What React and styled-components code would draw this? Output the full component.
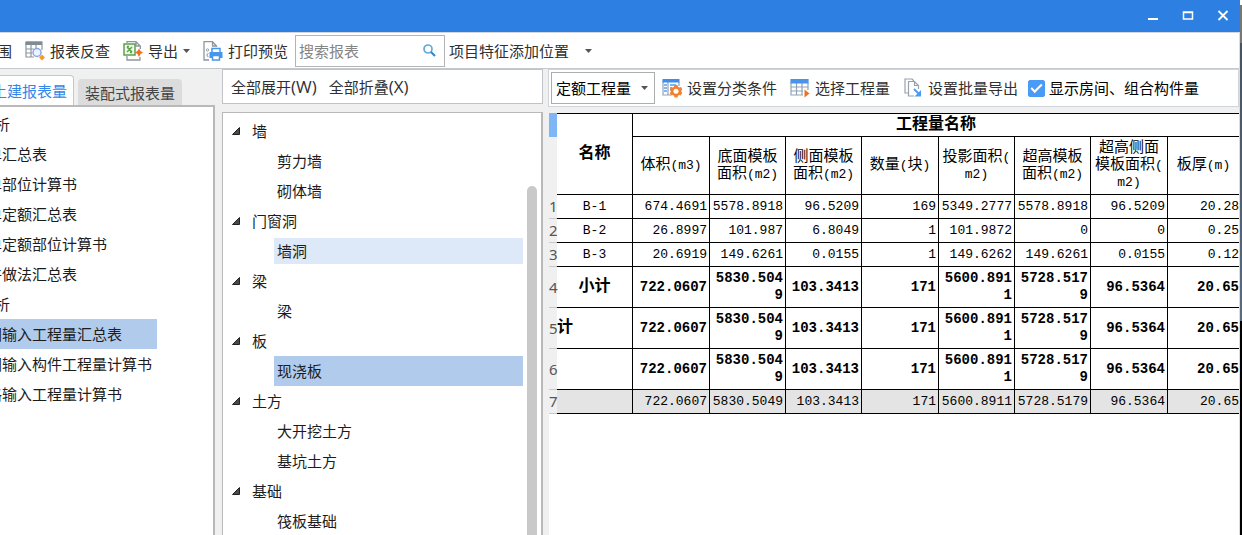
import React, { useState } from "react";
import styled, { createGlobalStyle } from "styled-components";

const GlobalStyle = createGlobalStyle`
  * {
    box-sizing: border-box;
  }

  body {
    margin: 0;
    overflow: hidden;
    background: #f0f0f0;
    color: #1c1c1c;
    font-family: "Open Sans", "Noto Sans CJK SC", sans-serif;
    font-size: 15px;
    line-height: 20px;
  }

  button, input, select {
    font: inherit;
    color: inherit;
  }
`;

const Screen = styled.div`
  display: flex;
  height: 100vh;
`;
const Window = styled.div`
  flex: 1;
  min-width: 0;
  display: flex;
  flex-direction: column;
  border-right: 1px solid #d5dce6;
`;
const DesktopEdge = styled.div`
  width: 2px;
  background: linear-gradient(#fff 1%, #777 1%, #777 8%, #46525f 8%, #5a6b80 60%, #000 60%);
`;
const TitleBar = styled.header`
  display: flex;
  justify-content: flex-end;
  align-items: center;
  gap: 13px;
  height: 32px;
  padding-right: 6px;
  margin-right: -1px;
  background: #2d80e2;
`;
const WindowButton = styled.button`
  display: flex;
  padding: 5px;
  border: none;
  background: none;

  svg {
    width: 12px;
    height: 12px;
  }
`;
const Toolbar = styled.div`
  display: flex;
  align-items: center;
  gap: 1px;
  height: 37px;
  background: #fff;
  border-top: 1px solid #d3d7dc;
  border-bottom: 1px solid #c3c9cf;
`;
const ToolButton = styled.button`
  display: flex;
  align-items: center;
  gap: 5px;
  height: 28px;
  padding: 0 6px;
  margin-left: ${(props) => (props.$cut ? "-9px" : "0")};
  border: none;
  background: none;
  color: #303030;
  white-space: nowrap;

  svg {
    flex: none;
  }
`;
const SearchBox = styled.label`
  display: flex;
  align-items: center;
  width: 150px;
  height: 32px;
  padding: 0 8px 0 3px;
  border: 1px solid #b4b4b4;

  input {
    flex: 1;
    min-width: 0;
    padding: 0;
    border: none;
    outline: none;
  }

  input::placeholder {
    color: #858585;
  }
`;
const PlaceButton = styled(ToolButton)`
  gap: 16px;
  padding: 0 3px;
`;
const Body = styled.div`
  flex: 1;
  min-height: 0;
  display: flex;
`;
const ReportPane = styled.section`
  display: flex;
  flex-direction: column;
  width: 215px;
  margin-right: 7px;
`;
const Tabs = styled.div`
  display: flex;
  align-items: flex-end;
  gap: 4px;
  height: 36px;
  overflow: hidden;
`;
const Tab = styled.button`
  height: ${(props) => (props.$active ? "30px" : "26px")};
  padding: 0 6px;
  margin-left: ${(props) => (props.$active ? "-15px" : "0")};
  border: 1px solid ${(props) => (props.$active ? "#c4c8cc" : "#dcdcdc")};
  border-bottom: none;
  border-radius: 4px 4px 0 0;
  background: ${(props) => (props.$active ? "#fff" : "#dcdcdc")};
  color: ${(props) => (props.$active ? "#3487e8" : "#444")};
  white-space: nowrap;
`;
const ReportList = styled.ul`
  flex: 1;
  margin: 0;
  padding: 2px 0 0;
  list-style: none;
  overflow: hidden;
  background: #fff;
  border-top: 2px solid #b9b9b9;
  border-right: 2px solid #b9b9b9;
`;
const ReportItem = styled.button`
  display: flex;
  align-items: center;
  height: 30px;
  padding: 0 35px 0 0;
  margin-left: ${(props) => (props.$group ? "-5px" : "-13px")};
  border: none;
  background: ${(props) => (props.$selected ? "#b1cbec" : "none")};
  white-space: nowrap;
`;
const TreePane = styled.section`
  display: flex;
  flex-direction: column;
  gap: 8px;
  width: 321px;
  margin-right: 5px;
`;
const TreeActions = styled.div`
  display: flex;
  align-items: center;
  height: 35px;
  padding-left: 2px;
  background: #fff;
  border: 1px solid #c0c3c7;

  button {
    gap: 0;
  }
`;
const Shortcut = styled.span`
  font-size: 17px;
`;
const TreeBox = styled.div`
  flex: 1;
  min-height: 0;
  display: flex;
  background: #fff;
  border: 1px solid #b9b9b9;
  border-width: 1px 2px 0 1px;
`;
const Tree = styled.ul`
  flex: 1;
  margin: 0;
  padding: 3px 4px 0 9px;
  list-style: none;
  overflow: hidden;

  ul {
    margin: 0;
    padding: 0 0 0 42px;
    list-style: none;
  }
`;
const TreeGroup = styled.button`
  display: flex;
  align-items: center;
  gap: 12px;
  height: 30px;
  padding: 0;
  border: none;
  background: none;
`;
const leafColors = { selected: "#b1cbec", hover: "#dde8f9" };
const TreeLeaf = styled.button`
  display: block;
  width: 100%;
  height: ${(props) => (props.$state === "hover" ? "26px" : "30px")};
  margin: ${(props) => (props.$state === "hover" ? "2px 0" : "0")};
  padding: 0 3px;
  border: none;
  background: ${(props) => leafColors[props.$state] || "none"};
  text-align: left;
`;
const ScrollThumb = styled.div`
  width: 10px;
  margin: 73px 4px 0 0;
  border-radius: 5px 5px 0 0;
  background: #c9c9c9;
`;
const DataPane = styled.section`
  flex: 1;
  min-width: 0;
  display: flex;
  flex-direction: column;
  gap: 6px;
`;
const DataToolbar = styled.div`
  display: flex;
  align-items: center;
  gap: 1px;
  height: 38px;
  padding-left: 2px;
  background: #fff;
  border: 1px solid #d0d5db;
`;
const SelectBox = styled.div`
  display: flex;
  align-items: center;
  width: 104px;
  height: 32px;
  padding-right: 6px;
  border: 1px solid #adadad;

  select {
    flex: 1;
    min-width: 0;
    height: 28px;
    padding: 0 0 0 4px;
    border: none;
    outline: none;
    appearance: none;
    background: none;
    color: #000;
  }

  svg {
    flex: none;
  }
`;
const CheckLabel = styled.label`
  display: flex;
  align-items: center;
  gap: 4px;
  margin-left: 3px;
  color: #000;
  white-space: nowrap;
`;
const Checkbox = styled.input`
  appearance: none;
  display: grid;
  place-items: center;
  width: 17px;
  height: 17px;
  margin: 0;
  border-radius: 2px;
  border: 1px solid #4a9bf5;

  &:checked {
    background: #4a9bf5;
  }

  &:checked::before {
    content: "";
    width: 9px;
    height: 4px;
    margin-bottom: 3px;
    border: solid #fff;
    border-width: 0 0 2px 2px;
    transform: rotate(-45deg);
  }
`;
const Sheet = styled.div`
  flex: 1;
  min-height: 0;
  margin-left: 1px;
  overflow: hidden;
  background: #fff;
`;
const Table = styled.table`
  width: 100%;
  table-layout: fixed;
  border-collapse: separate;
  border-spacing: 0;
  color: #000;
  font-family: "Liberation Mono", "Noto Sans CJK SC", monospace;
  font-size: 13px;
  line-height: 17px;

  tr:first-child > .top {
    border-top: 1px solid #000;
  }

  tr > *:last-child {
    border-right: none;
  }
`;
const Col = styled.col`
  width: ${(props) => props.$width};
`;
const HeadCell = styled.th`
  height: ${(props) => (props.$title ? "24px" : "58px")};
  padding: 0 2px;
  border-right: 1px solid #000;
  border-bottom: 1px solid #000;
  font-size: ${(props) => (props.$title ? "16px" : "15px")};
  font-weight: ${(props) => (props.$title ? "bold" : "normal")};
`;
const Latin = styled.span`
  font-size: 13px;
`;
const Corner = styled.th`
  padding: 0;
  background: ${(props) => (props.$active ? "#7fb6f6" : "#f0f0f0")};
`;
const RowNumber = styled.th`
  padding: 0;
  background: #f0f0f0;
  border-bottom: 1px solid #c8c8c8;
  color: #555;
  font-family: "Noto Sans", sans-serif;
  font-size: 15px;
  font-weight: normal;
  text-align: left;
`;
const Row = styled.tr`
  height: ${(props) => (props.$bold ? "41px" : "24px")};
  background: ${(props) => (props.$grand ? "#e4e4e4" : "#fff")};
  font-size: ${(props) => (props.$bold ? "14px" : "13px")};
  font-weight: ${(props) => (props.$bold ? "bold" : "normal")};
`;
const NameCell = styled.td`
  padding: 0;
  border-right: 1px solid #000;
  border-bottom: 1px solid #000;
  font-size: ${(props) => (props.$bold ? "16px" : "13px")};
  text-align: ${(props) => props.$align || "center"};
`;
const ValueCell = styled.td`
  padding: 0 2px;
  border-right: 1px solid #000;
  border-bottom: 1px solid #000;
  text-align: right;
  word-break: break-all;

  &:last-child {
    padding-right: 0;
  }
`;

const Caret = () => (
  <svg width="7" height="4" viewBox="0 0 7 4">
    <path d="M0 0h7L3.500 4z" fill="#555" />
  </svg>
);

const Expanded = () => (
  <svg width="8" height="8" viewBox="0 0 8 8">
    <path d="M7.500 0.500v7h-7z" fill="#4a4a4a" stroke="#222" />
  </svg>
);

const LookupIcon = () => (
  <svg width="20" height="20" viewBox="0 0 20 20" fill="none">
    <path d="M1 1h16v8M1 1v15h8M1 8h8M1 12h6M6 4v12M11 4v4" stroke="#8d979f" strokeWidth="1.2" />
    <path d="M.5.5h16.500v3.500H.5z" fill="#7f8b95" />
    <circle cx="12" cy="11.500" r="4" fill="#eef4ff" stroke="#8ba6e6" strokeWidth="1.500" />
    <path d="M17 13.500l3 3-3 3-3-3z" fill="#f59a23" />
  </svg>
);

const ExportIcon = () => (
  <svg width="20" height="20" viewBox="0 0 20 20" fill="none">
    <path d="M4 2V.7h9l4.300 4.300v3M13 .7V5h4M4 15v4h13v-3" stroke="#8d979f" strokeWidth="1.300" />
    <path d="M1 3h11v11H1z" fill="#eef8ea" stroke="#5da34a" strokeWidth="1.500" />
    <path d="M4 6l5 5M9 6l-5 5M4 5.500h2M7 11.500h2" stroke="#5da34a" strokeWidth="1.500" />
    <path d="M16 7.500l1.500 2.500 2.500 1.500-2.500 1.500-1.500 3-1.500-3-2.500-1.500 2.500-1.500z" fill="#f2701d" />
  </svg>
);

const PrintIcon = () => (
  <svg width="20" height="20" viewBox="0 0 20 20" fill="none">
    <path d="M6 19H1V.7h8.500L13.500 5v1M9.500.7V5h4" stroke="#8d979f" strokeWidth="1.300" />
    <circle cx="4.500" cy="9" r="1.200" stroke="#9aa4ac" />
    <path d="M5.500 12.500a1.500 1.500 0 1 0 0 3" stroke="#9aa4ac" strokeWidth="1.200" />
    <path d="M9 11V7.500h8V11" stroke="#4795ec" strokeWidth="1.500" />
    <path d="M6.500 11h13v6h-13z" fill="#4795ec" />
    <path d="M9.500 14.500h7v4.500h-7z" fill="#fff" stroke="#4795ec" strokeWidth="1.500" />
  </svg>
);

const SearchIcon = () => (
  <svg width="13" height="13" viewBox="0 0 13 13" fill="none">
    <circle cx="5" cy="5" r="4" stroke="#62abd8" strokeWidth="1.700" />
    <path d="M8 8l4 4" stroke="#2d8cc9" strokeWidth="2.200" />
  </svg>
);

const ConditionIcon = () => (
  <svg width="20" height="20" viewBox="0 0 20 20" fill="none">
    <path d="M1 3v14h8M6 4v13M17 4v4" stroke="#8fa3b5" strokeWidth="1.200" />
    <path d="M.5 1h17v3.500H.5z" fill="#3f8de8" />
    <path d="M2 7h3M2 10h3M2 13h3M8 7h6M8 10h2" stroke="#5c9de8" strokeWidth="1.300" />
    <path
      d="M12.500 7h3l.5 1.700 1.200.7 1.800-.4 1.200 2.500-1 1.500 1 2-1.500 2.500-1.700-.4-1 .7-.6 1.700h-2.800l-.6-1.700-1.200-.7-1.700.4-1.300-2.500 1.200-1.500-1.200-1.500L9.100 9l1.700.4 1.200-.7z"
      fill="#f28130"
    />
    <circle cx="14" cy="13.200" r="2.500" fill="#fff" />
  </svg>
);

const SelectIcon = () => (
  <svg width="20" height="20" viewBox="0 0 20 20" fill="none">
    <path d="M1 5v12h12M1 9h17M1 13h12M6.500 5v12M12 5v12M18 5v7" stroke="#8fa3b5" strokeWidth="1.200" />
    <path d="M.4 1h18.200v4.500H.4z" fill="#4a93ea" />
    <path d="M14.500 11.500l5 4-5 4z" fill="#f2701d" />
  </svg>
);

const BatchIcon = () => (
  <svg width="20" height="20" viewBox="0 0 18 20" fill="none">
    <path d="M4 15H1V1h7l2 2" stroke="#98a2ab" strokeWidth="1.200" />
    <path d="M10 18H4.500V3.500h6l4 4V11M10.500 3.500v4h4" stroke="#98a2ab" strokeWidth="1.200" />
    <path d="M10 11l5 5" stroke="#4a9bf5" strokeWidth="2" />
    <path d="M17 12v6.500h-6.500z" fill="#4a9bf5" />
  </svg>
);

const reports = [
  { name: "析", group: true },
  { name: "单汇总表" },
  { name: "单部位计算书" },
  { name: "单定额汇总表" },
  { name: "单定额部位计算书" },
  { name: "件做法汇总表" },
  { name: "析", group: true },
  { name: "图输入工程量汇总表" },
  { name: "图输入构件工程量计算书" },
  { name: "格输入工程量计算书" },
];

const tree = [
  { name: "墙", children: ["剪力墙", "砌体墙"] },
  { name: "门窗洞", children: ["墙洞"] },
  { name: "梁", children: ["梁"] },
  { name: "板", children: ["现浇板"] },
  { name: "土方", children: ["大开挖土方", "基坑土方"] },
  { name: "基础", children: ["筏板基础"] },
];

// each line is a list of [text, latin part]
const headings = [
  [["体积", "(m3)"]],
  [["底面模板"], ["面积", "(m2)"]],
  [["侧面模板"], ["面积", "(m2)"]],
  [["数量", "("], ["块", ")"]],
  [["投影面积", "("], ["", "m2)"]],
  [["超高模板"], ["面积", "(m2)"]],
  [["超高侧面"], ["模板面积", "("], ["", "m2)"]],
  [["板厚", "(m)"]],
];

const totals = ["722.0607", "5830.5049", "103.3413", "171", "5600.8911", "5728.5179", "96.5364", "20.65"];
const rows = [
  { name: "B-1", values: ["674.4691", "5578.8918", "96.5209", "169", "5349.2777", "5578.8918", "96.5209", "20.28"] },
  { name: "B-2", values: ["26.8997", "101.987", "6.8049", "1", "101.9872", "0", "0", "0.25"] },
  { name: "B-3", values: ["20.6919", "149.6261", "0.0155", "1", "149.6262", "149.6261", "0.0155", "0.12"] },
  { name: "小计", values: totals, bold: true },
  { name: "计", values: totals, bold: true, align: "left" },
  { name: "", values: totals, bold: true },
  { name: "", values: totals, grand: true },
];

const Heading = ({ lines, inline }) =>
  lines.map(([text, latin], index) => (
    <React.Fragment key={index}>
      {index > 0 && !inline && <br />}
      {text}
      {latin && <Latin>{latin}</Latin>}
    </React.Fragment>
  ));

const ReportPanel = () => {
  const [selected, setSelected] = useState(7);
  return (
    <ReportPane>
      <Tabs role="tablist">
        <Tab role="tab" aria-selected="true" $active>
          土建报表量
        </Tab>
        <Tab role="tab" aria-selected="false">
          装配式报表量
        </Tab>
      </Tabs>
      <ReportList>
        {reports.map((report, index) => (
          <li key={index}>
            <ReportItem
              $group={report.group}
              $selected={index === selected}
              onClick={() => setSelected(index)}
            >
              {report.name}
            </ReportItem>
          </li>
        ))}
      </ReportList>
    </ReportPane>
  );
};

const TreePanel = () => {
  const [selected, setSelected] = useState("现浇板");
  const stateOf = (name) => {
    if (name === selected) return "selected";
    return name === "墙洞" ? "hover" : "";
  };
  return (
    <TreePane>
      <TreeActions>
        <ToolButton>
          全部展开<Shortcut>(W)</Shortcut>
        </ToolButton>
        <ToolButton>
          全部折叠<Shortcut>(X)</Shortcut>
        </ToolButton>
      </TreeActions>
      <TreeBox>
        <Tree>
          {tree.map((group) => (
            <li key={group.name}>
              <TreeGroup>
                <Expanded />
                {group.name}
              </TreeGroup>
              <ul>
                {group.children.map((name) => (
                  <li key={name}>
                    <TreeLeaf $state={stateOf(name)} onClick={() => setSelected(name)}>
                      {name}
                    </TreeLeaf>
                  </li>
                ))}
              </ul>
            </li>
          ))}
        </Tree>
        <ScrollThumb />
      </TreeBox>
    </TreePane>
  );
};

const QuantityTable = () => (
  <Table>
    <colgroup>
      <Col $width="8px" />
      <Col $width="76px" />
      {headings.slice(1).map((_, index) => (
        <Col key={index} $width={index % 3 === 0 ? "77px" : "76px"} />
      ))}
      <Col $width="auto" />
    </colgroup>
    <thead>
      <tr>
        <Corner $active />
        <HeadCell className="top" rowSpan="2" $title>
          名称
        </HeadCell>
        <HeadCell className="top" colSpan="8" $title>
          工程量名称
        </HeadCell>
      </tr>
      <tr>
        <Corner />
        {headings.map((lines, index) => (
          <HeadCell key={index}>
            <Heading lines={lines} inline={index === 3} />
          </HeadCell>
        ))}
      </tr>
    </thead>
    <tbody>
      {rows.map((row, index) => (
        <Row key={index} $bold={row.bold} $grand={row.grand}>
          <RowNumber>{index + 1}</RowNumber>
          <NameCell $bold={row.bold} $align={row.align}>
            {row.name}
          </NameCell>
          {row.values.map((value, column) => (
            <ValueCell key={column}>{value}</ValueCell>
          ))}
        </Row>
      ))}
    </tbody>
  </Table>
);

const DataPanel = () => {
  const [showRooms, setShowRooms] = useState(true);
  return (
    <DataPane>
      <DataToolbar>
        <SelectBox>
          <select aria-label="工程量类型">
            <option>定额工程量</option>
          </select>
          <Caret />
        </SelectBox>
        <ToolButton>
          <ConditionIcon />
          设置分类条件
        </ToolButton>
        <ToolButton>
          <SelectIcon />
          选择工程量
        </ToolButton>
        <ToolButton>
          <BatchIcon />
          设置批量导出
        </ToolButton>
        <CheckLabel>
          <Checkbox
            type="checkbox"
            checked={showRooms}
            onChange={(e) => setShowRooms(e.target.checked)}
          />
          显示房间、组合构件量
        </CheckLabel>
      </DataToolbar>
      <Sheet>
        <QuantityTable />
      </Sheet>
    </DataPane>
  );
};

const App = () => (
  <Screen>
    <GlobalStyle />
    <Window>
      <TitleBar>
        <WindowButton aria-label="最小化">
          <svg viewBox="0 0 12 12">
            <path d="M1 9h10" stroke="#fff" strokeWidth="2" />
          </svg>
        </WindowButton>
        <WindowButton aria-label="最大化">
          <svg viewBox="0 0 12 12" fill="none">
            <path d="M1.500 2h9v7h-9zM1 2.500h10" stroke="#fff" strokeWidth="1.500" />
          </svg>
        </WindowButton>
        <WindowButton aria-label="关闭">
          <svg viewBox="0 0 12 12">
            <path d="M1.500 1l9 9M10.500 1l-9 9" stroke="#fff" strokeWidth="1.800" />
          </svg>
        </WindowButton>
      </TitleBar>
      <Toolbar>
        <ToolButton $cut>围</ToolButton>
        <ToolButton>
          <LookupIcon />
          报表反查
        </ToolButton>
        <ToolButton>
          <ExportIcon />
          导出
          <Caret />
        </ToolButton>
        <ToolButton>
          <PrintIcon />
          打印预览
        </ToolButton>
        <SearchBox>
          <input type="text" placeholder="搜索报表" aria-label="搜索报表" />
          <SearchIcon />
        </SearchBox>
        <PlaceButton>
          项目特征添加位置
          <Caret />
        </PlaceButton>
      </Toolbar>
      <Body>
        <ReportPanel />
        <TreePanel />
        <DataPanel />
      </Body>
    </Window>
    <DesktopEdge />
  </Screen>
);

export default App;
